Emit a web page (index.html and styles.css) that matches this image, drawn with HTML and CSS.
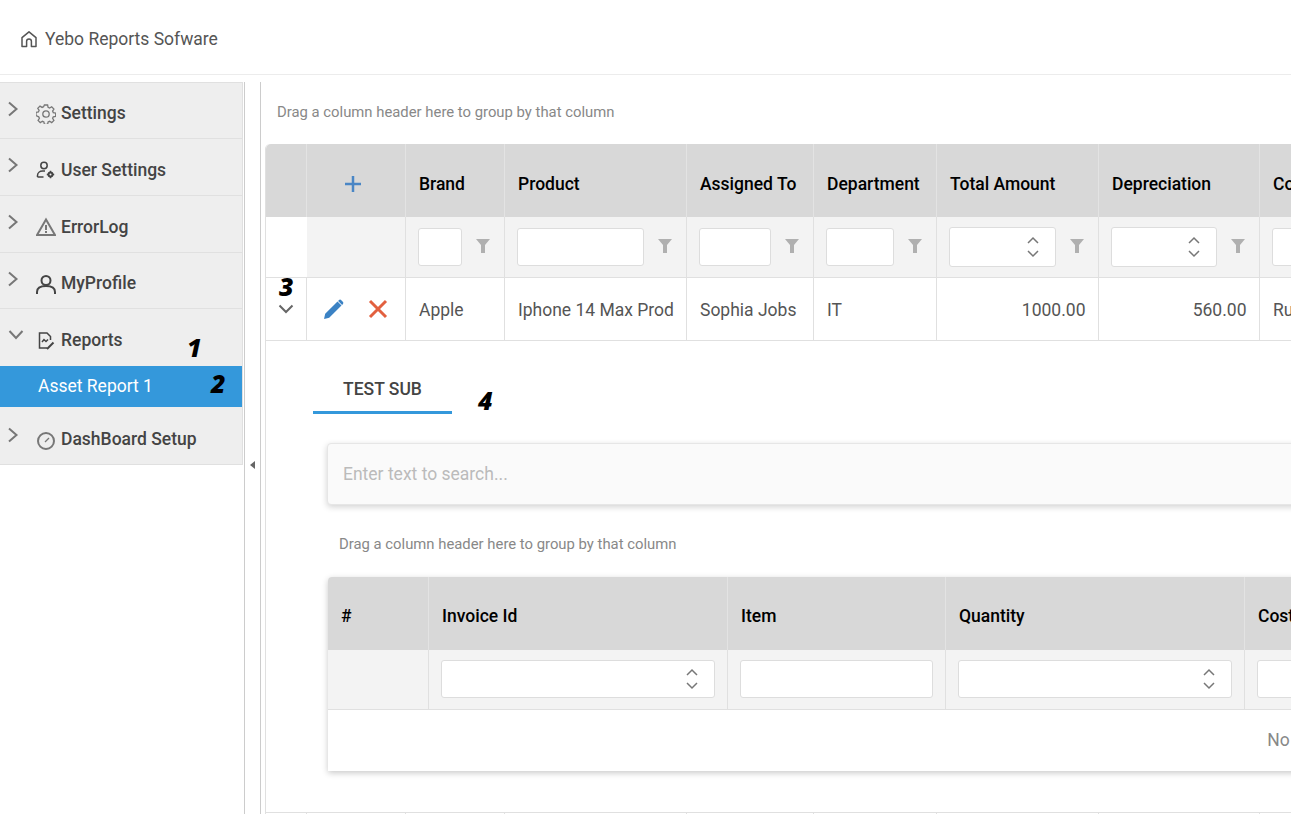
FILE: index.html
```html
<!DOCTYPE html>
<html lang="en">
<head>
    <meta charset="UTF-8">
    <title>Yebo Reports Sofware</title>
    <link rel="stylesheet" href="styles.css">
</head>
<body>
    <div class="app">
        <header class="topbar">
            <svg class="home-icon" viewBox="0 0 18 18"><path d="M2 16.500V7.600L9 1.800l7 5.800v8.900h-4.600v-5.200a2.400 2.400 0 0 0-4.800 0v5.200z"/></svg>
            <span>Yebo Reports Sofware</span>
        </header>
        <div class="workspace">
            <aside class="sidebar">
                <div class="side-item">
                    <svg class="chev" viewBox="0 0 12 16"><path d="M2 1.500l7.500 6.500L2 14.500"/></svg>
                    <svg class="side-icon" viewBox="0 0 20 20"><path class="grey" d="M8.400 1h3.200l.5 2.400 1.500.7 2.100-1.300 2.200 2.200-1.300 2.100.7 1.500 2.400.5v3.200l-2.400.5-.7 1.500 1.300 2.100-2.200 2.200-2.100-1.300-1.500.7-.5 2.400H8.400l-.5-2.400-1.500-.7-2.100 1.300-2.200-2.200 1.300-2.100-.7-1.500L0 11.600V8.400l2.400-.5.7-1.500-1.300-2.100 2.200-2.200 2.100 1.300 1.500-.7z"/><circle class="grey" cx="10" cy="10" r="3.200"/></svg>
                    <span>Settings</span>
                </div>
                <div class="side-item">
                    <svg class="chev" viewBox="0 0 12 16"><path d="M2 1.500l7.500 6.500L2 14.500"/></svg>
                    <svg class="side-icon" viewBox="0 0 20 20"><circle class="dark" cx="8" cy="5.500" r="3.200"/><path class="dark" d="M1.500 17v-1.500c0-2.800 2.400-4.500 5-4.500h2.500M1.500 17h6"/><circle class="dark thick" cx="14.500" cy="14.500" r="2"/><path class="dark" d="M14.500 10.800v1.200M14.500 17v1.200M10.800 14.500H12M17 14.500h1.200"/></svg>
                    <span>User Settings</span>
                </div>
                <div class="side-item">
                    <svg class="chev" viewBox="0 0 12 16"><path d="M2 1.500l7.500 6.500L2 14.500"/></svg>
                    <svg class="side-icon" viewBox="0 0 20 20"><path class="grey thick" d="M10 2.500L1 18h18z"/><path class="grey thick" d="M10 8v5M10 14v2"/></svg>
                    <span>ErrorLog</span>
                </div>
                <div class="side-item">
                    <svg class="chev" viewBox="0 0 12 16"><path d="M2 1.500l7.500 6.500L2 14.500"/></svg>
                    <svg class="side-icon" viewBox="0 0 20 20"><circle class="dark thick" cx="10" cy="6.500" r="4.500"/><path class="dark thick" d="M1 20v-2c0-3.500 3-6 9-6s9 2.500 9 6v2"/></svg>
                    <span>MyProfile</span>
                </div>
                <div class="side-item is-open">
                    <svg class="chev-down" viewBox="0 0 16 12"><path d="M1.500 2l6.500 7 6.500-7"/></svg>
                    <svg class="side-icon" viewBox="0 0 20 20"><path class="dark" d="M11 17H3.500V2H11l3.500 3.500V9"/><path class="dark" d="M6 11l2-2.500 2 2 2-2"/><path class="dark thick" d="M11 18l6.500-6.500"/></svg>
                    <span>Reports</span>
                </div>
                <div class="side-sub">Asset Report 1</div>
                <div class="side-item">
                    <svg class="chev" viewBox="0 0 12 16"><path d="M2 1.500l7.500 6.500L2 14.500"/></svg>
                    <svg class="side-icon" viewBox="0 0 20 20"><circle class="grey thick" cx="10" cy="11" r="8"/><path class="grey" d="M9 12l4-4"/></svg>
                    <span>DashBoard Setup</span>
                </div>
            </aside>
            <div class="splitter"><span class="split-arrow"></span></div>
            <main class="content">
                <div class="group-hint main-hint">Drag a column header here to group by that column</div>
                <table class="grid main-grid">
                    <colgroup>
                        <col class="c41"><col class="c99"><col class="c99"><col class="c182"><col class="c127"><col class="c123"><col class="c162"><col class="c161"><col class="c-rest">
                    </colgroup>
                    <thead>
                        <tr class="head-row">
                            <th></th>
                            <th class="center"><svg class="plus-icon" viewBox="0 0 18 18"><path d="M9 1v16M1 9h16"/></svg></th>
                            <th>Brand</th>
                            <th>Product</th>
                            <th>Assigned To</th>
                            <th>Department</th>
                            <th>Total Amount</th>
                            <th>Depreciation</th>
                            <th>Company</th>
                        </tr>
                        <tr class="filter-row">
                            <td class="blank"></td>
                            <td></td>
                            <td><div class="filter"><input class="box" type="text"><svg class="funnel" viewBox="0 0 14 14"><path d="M0 0h14L9 6v8H5V6z"/></svg></div></td>
                            <td><div class="filter"><input class="box" type="text"><svg class="funnel" viewBox="0 0 14 14"><path d="M0 0h14L9 6v8H5V6z"/></svg></div></td>
                            <td><div class="filter"><input class="box" type="text"><svg class="funnel" viewBox="0 0 14 14"><path d="M0 0h14L9 6v8H5V6z"/></svg></div></td>
                            <td><div class="filter"><input class="box" type="text"><svg class="funnel" viewBox="0 0 14 14"><path d="M0 0h14L9 6v8H5V6z"/></svg></div></td>
                            <td><div class="filter"><div class="box spin tall"><svg class="spin-icon" viewBox="0 0 12 24"><path d="M1 8l5-5 5 5M1 16l5 5 5-5"/></svg></div><svg class="funnel" viewBox="0 0 14 14"><path d="M0 0h14L9 6v8H5V6z"/></svg></div></td>
                            <td><div class="filter"><div class="box spin tall"><svg class="spin-icon" viewBox="0 0 12 24"><path d="M1 8l5-5 5 5M1 16l5 5 5-5"/></svg></div><svg class="funnel" viewBox="0 0 14 14"><path d="M0 0h14L9 6v8H5V6z"/></svg></div></td>
                            <td><div class="filter"><input class="box" type="text"></div></td>
                        </tr>
                    </thead>
                    <tbody>
                        <tr class="data-row">
                            <td class="center"><svg class="row-chev" viewBox="0 0 16 10"><path d="M1.500 1.500L8 8l6.500-6.500"/></svg></td>
                            <td>
                                <div class="row-actions">
                                    <svg class="pencil" viewBox="0 0 20 20"><path d="M0 20l1.200-5.200L13.500 2.500l4 4L5.200 18.800zM14.800 1.200c.8-.8 1.800-.8 2.500 0l1.500 1.500c.7.700.7 1.700 0 2.500l-.7.700-4-4z"/></svg>
                                    <svg class="cross" viewBox="0 0 20 20"><path d="M2 2l16 16M18 2L2 18"/></svg>
                                </div>
                            </td>
                            <td>Apple</td>
                            <td>Iphone 14 Max Prod</td>
                            <td>Sophia Jobs</td>
                            <td>IT</td>
                            <td class="num">1000.00</td>
                            <td class="num">560.00</td>
                            <td>Rupee</td>
                        </tr>
                        <tr>
                            <td class="detail" colspan="9">
                                <div class="tab">TEST SUB</div>
                                <div class="detail-body">
                                    <div class="search-box">Enter text to search...</div>
                                    <div class="group-hint sub-hint">Drag a column header here to group by that column</div>
                                    <table class="grid sub-grid">
                                        <colgroup>
                                            <col class="s101"><col class="s299"><col class="s218"><col class="s299"><col class="s-rest">
                                        </colgroup>
                                        <thead>
                                            <tr class="head-row">
                                                <th>#</th>
                                                <th>Invoice Id</th>
                                                <th>Item</th>
                                                <th>Quantity</th>
                                                <th>Cost</th>
                                            </tr>
                                            <tr class="sub-filter">
                                                <td></td>
                                                <td><div class="box spin"><svg class="spin-icon" viewBox="0 0 12 24"><path d="M1 8l5-5 5 5M1 16l5 5 5-5"/></svg></div></td>
                                                <td><input class="box wide" type="text"></td>
                                                <td><div class="box spin"><svg class="spin-icon" viewBox="0 0 12 24"><path d="M1 8l5-5 5 5M1 16l5 5 5-5"/></svg></div></td>
                                                <td><input class="box wide" type="text"></td>
                                            </tr>
                                        </thead>
                                        <tbody>
                                            <tr>
                                                <td class="no-data" colspan="5">No data</td>
                                            </tr>
                                        </tbody>
                                    </table>
                                </div>
                            </td>
                        </tr>
                        <tr class="next-row">
                            <td></td><td></td><td></td><td></td><td></td><td></td><td></td><td></td><td></td>
                        </tr>
                    </tbody>
                </table>
            </main>
        </div>
    </div>

    <!-- numbered callouts drawn over the screenshot -->
    <span class="callout call-1">1</span>
    <span class="callout call-2">2</span>
    <span class="callout call-3">3</span>
    <span class="callout call-4">4</span>
</body>
</html>
```

FILE: styles.css
```css
* {
    box-sizing: border-box;
}
html, body {
    margin: 0;
    height: 100%;
    overflow: hidden;
}
body {
    font-family: Roboto, "Liberation Sans", sans-serif;
    background: #fff;
    color: #555;
}
svg {
    display: block;
    fill: none;
}
.app {
    display: flex;
    flex-direction: column;
    height: 814px;
    overflow: hidden;
}
.topbar {
    display: flex;
    align-items: center;
    gap: 7px;
    height: 75px;
    padding: 3px 0 0 20px;
    border-bottom: 1px solid #ececec;
    font-size: 17.500px;
    color: #555;
    flex-shrink: 0;
}
.home-icon {
    width: 18px;
    height: 18px;
    stroke: #555;
    stroke-width: 1.500;
    stroke-linejoin: round;
}
.workspace {
    flex: 1;
    display: flex;
    min-height: 0;
    padding-top: 7px;
}
.sidebar {
    width: 243px;
    flex-shrink: 0;
    align-self: flex-start;
    margin-top: -0.330px;
    background: #eee;
    border: 1px solid #e0e0e0;
    border-left: none;
}
.side-item {
    display: flex;
    align-items: center;
    height: 56.670px;
    padding: 5.600px 0 0 36px;
    position: relative;
    border-bottom: 1px solid #e0e0e0;
    font-size: 17.500px;
    font-weight: 500;
    color: #444;
}
.side-item:last-child {
    border-bottom: none;
    height: 57px;
    padding-top: 8px;
}
.side-item:last-child .chev {
    top: 20px;
}
.side-item.is-open {
    border-bottom: none;
}
.side-icon {
    width: 20px;
    height: 20px;
    margin: 1px 5px 0 0;
    flex-shrink: 0;
}
.side-icon .grey {
    stroke: #777;
    stroke-width: 1.300;
}
.side-icon .dark {
    stroke: #444;
    stroke-width: 1.500;
}
.side-icon .thick {
    stroke-width: 2;
}
.chev {
    position: absolute;
    left: 7px;
    top: 18px;
    width: 12px;
    height: 16px;
    stroke: #777;
    stroke-width: 2;
}
.chev-down {
    position: absolute;
    left: 8px;
    top: 20px;
    width: 16px;
    height: 12px;
    stroke: #777;
    stroke-width: 2;
}
.side-sub {
    height: 41px;
    padding-left: 38px;
    background: #3498db;
    color: #fff;
    font-size: 17.500px;
    line-height: 40px;
}
.splitter {
    width: 17px;
    flex-shrink: 0;
    margin-left: 1px;
    border-left: 1px solid #ccc;
    border-right: 1px solid #ccc;
    display: flex;
    align-items: flex-start;
    justify-content: center;
    padding-top: 379px;
}
.split-arrow {
    width: 0;
    height: 0;
    border-top: 4px solid transparent;
    border-bottom: 4px solid transparent;
    border-right: 5px solid #666;
}
.content {
    flex: 1;
    min-width: 0;
    overflow: hidden;
    padding-left: 4px;
}
.group-hint {
    font-size: 14.850px;
    color: #888;
    white-space: nowrap;
}
.main-hint {
    padding-left: 12px;
    height: 62px;
    line-height: 60px;
}
.grid {
    border-collapse: separate;
    border-spacing: 0;
    table-layout: fixed;
}
.main-grid {
    width: 2100px;
    border-left: 1px solid #e0e0e0;
    border-top-left-radius: 5px;
}
.c41 { width: 41px; }
.c99 { width: 99px; }
.c182 { width: 182px; }
.c127 { width: 127px; }
.c123 { width: 123px; }
.c162 { width: 162px; }
.c161 { width: 161px; }
.c-rest { width: 1105px; }
.s101 { width: 101px; }
.s299 { width: 299px; }
.s218 { width: 218px; }
.s-rest { width: 1023px; }
th {
    background: #d8d8d8;
    color: #000;
    font-size: 17.500px;
    font-weight: 500;
    text-align: left;
    padding: 6px 12px 0 13px;
    border-right: 1px solid #e3e3e3;
    white-space: nowrap;
    overflow: hidden;
}
.main-grid > thead > .head-row > th:first-child {
    border-top-left-radius: 5px;
}
td {
    font-size: 17.500px;
    padding: 2px 14px 0 13px;
    border-right: 1px solid #e0e0e0;
    border-bottom: 1px solid #e0e0e0;
    white-space: nowrap;
    overflow: hidden;
}
.head-row {
    height: 73px;
}
.filter-row {
    height: 61px;
}
.filter-row td {
    background: #f3f3f3;
    padding: 0 14px 0 12px;
}
.filter-row td.blank {
    background: #fff;
    border-right: none;
}
.filter {
    display: flex;
    align-items: center;
    gap: 14px;
}
.box {
    display: block;
    flex: 1;
    min-width: 0;
    height: 38px;
    border: 1px solid #ddd;
    border-radius: 3px;
    background: #fff;
    padding: 0;
}
.box.wide {
    width: 100%;
}
.box.spin {
    display: flex;
    align-items: center;
    justify-content: flex-end;
    padding-right: 16px;
}
.box.tall {
    height: 40px;
}
.spin-icon {
    width: 12px;
    height: 24px;
    stroke: #777;
    stroke-width: 1.500;
}
.funnel {
    width: 14px;
    height: 14px;
    flex-shrink: 0;
    margin-top: -3px;
    fill: #b0b0b0;
}
th.center {
    text-align: center;
    padding: 6px 0 0;
}
.plus-icon {
    width: 18px;
    height: 18px;
    margin-left: 37px;
    stroke: #4a86c5;
    stroke-width: 2.500;
}
.data-row {
    height: 63px;
}
.data-row td.center {
    padding: 0 0 1px;
}
.data-row td:nth-child(2) {
    padding-top: 0;
}
.row-chev {
    width: 16px;
    height: 10px;
    margin: 0 0 0 12px;
    stroke: #666;
    stroke-width: 2;
}
.row-actions {
    display: flex;
    align-items: center;
    gap: 24px;
    padding-left: 4px;
}
.pencil {
    width: 20px;
    height: 20px;
    fill: #3b82c4;
}
.cross {
    width: 20px;
    height: 20px;
    stroke: #e2603f;
    stroke-width: 3;
}
td.num {
    text-align: right;
    padding-right: 12.500px;
}
.detail {
    height: 472px;
    padding: 0;
    vertical-align: top;
}
.tab {
    width: 139px;
    height: 73px;
    margin-left: 47px;
    text-align: center;
    border-bottom: 3px solid #3498db;
    padding-top: 37px;
    font-size: 17.500px;
    font-weight: 500;
    color: #444;
    line-height: 22px;
}
.detail-body {
    padding: 29px 0 0 61px;
}
.search-box {
    width: 1940px;
    height: 62px;
    background: #fafafa;
    border: 1px solid #e6e6e6;
    border-radius: 4px;
    box-shadow: 0 2px 6px rgba(0, 0, 0, 0.18);
    padding-left: 15px;
    font-size: 17.500px;
    line-height: 61px;
    color: #bbb;
}
.sub-hint {
    padding-left: 12px;
    height: 72px;
    line-height: 78px;
}
.sub-grid {
    width: 1940px;
    margin-left: 1px;
    box-shadow: 0 2px 6px rgba(0, 0, 0, 0.22);
    border-top-left-radius: 4px;
}
.sub-grid th {
    padding-top: 4px;
}
.sub-grid th:first-child {
    border-top-left-radius: 4px;
}
.sub-filter {
    height: 60px;
}
.sub-filter td {
    background: #f3f3f3;
    padding: 0 12px 2px;
}
.sub-grid td:last-child {
    border-right: none;
}
.sub-grid td.no-data {
    height: 61px;
    padding: 0 0 2px;
    text-align: center;
    color: #888;
    background: #fff;
    border-bottom: none;
}
.next-row {
    height: 40px;
}
.callout {
    position: absolute;
    font-family: "Open Sans", sans-serif;
    font-size: 25px;
    font-weight: 800;
    font-style: italic;
    color: #000;
    line-height: 1;
}
.call-1 { left: 187px; top: 335px; }
.call-2 { left: 211px; top: 371px; }
.call-3 { left: 279px; top: 274px; }
.call-4 { left: 478px; top: 388px; }
```
